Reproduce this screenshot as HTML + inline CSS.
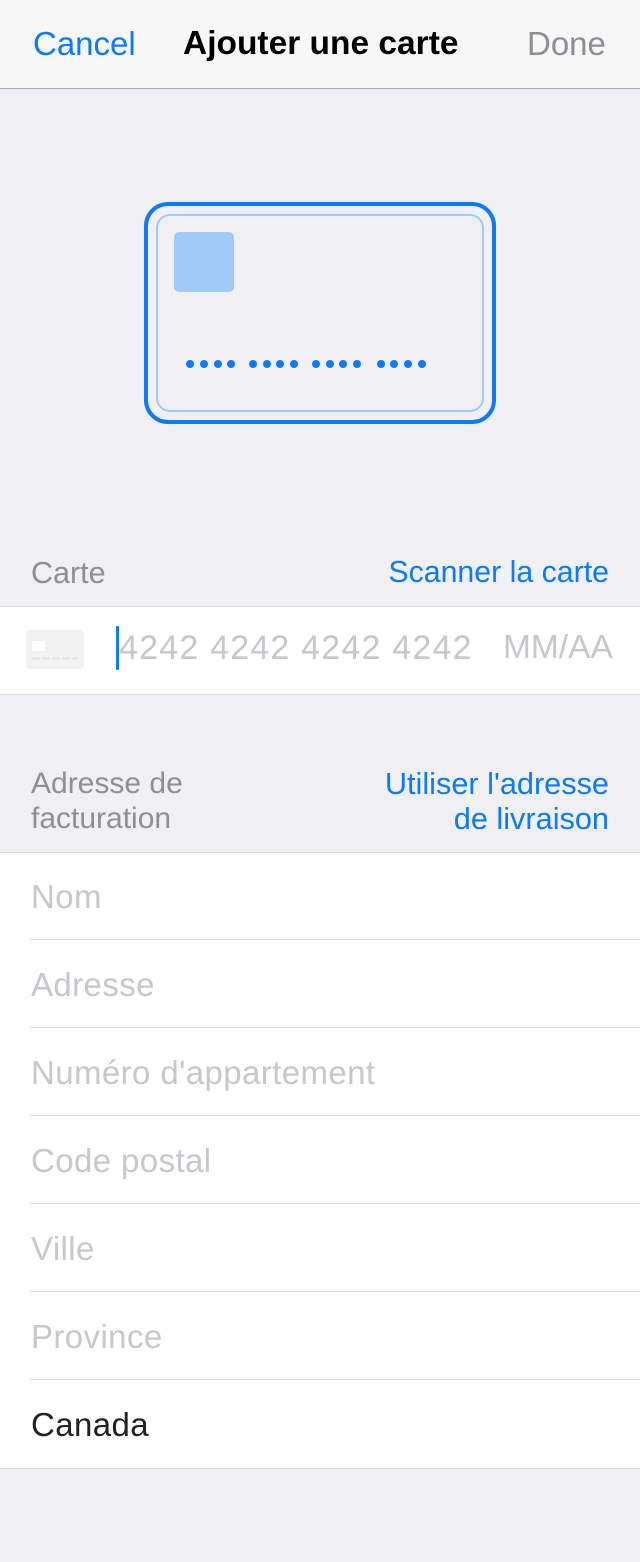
<!DOCTYPE html>
<html><head><meta charset="utf-8"><style>
body{margin:0;width:640px;height:1562px;background:#f0f0f3;font-family:"Liberation Sans",sans-serif;position:relative;overflow:hidden}
.a{position:absolute;white-space:nowrap}
.nav{position:absolute;left:0;top:0;width:640px;height:88px;background:#f7f7f7;border-bottom:1px solid #aaa}
.blue{color:#0a7aff}
.ph{color:#c7c7cc}
.row{position:absolute;left:0;width:640px;height:88px;background:#fff}
.row span{position:absolute;left:31px;top:25px;font-size:33px;letter-spacing:0.4px}
.sep{position:absolute;left:30px;right:0;height:1px;background:#d9d9dc}
.dot{position:absolute;width:8px;height:8px;border-radius:50%;background:#0a7aff;top:360px}
</style></head><body>
<div class="nav"></div>
<div class="a blue" style="left:33px;top:25px;font-size:33px">Cancel</div>
<div class="a" style="left:183px;top:25px;font-size:33.5px;font-weight:bold;color:#000">Ajouter une carte</div>
<div class="a" style="left:527px;top:25px;font-size:33px;color:#8e8e93">Done</div>

<div class="a" style="left:144px;top:202px;width:344px;height:214px;border:4px solid #0a7aff;border-radius:24px"></div>
<div class="a" style="left:156px;top:214px;width:324px;height:194px;border:2px solid #9ecbf9;border-radius:14px"></div>
<div class="a" style="left:174px;top:232px;width:60px;height:60px;border-radius:5px;background:#a0c9f8"></div>
<div class="dot" style="left:186px"></div><div class="dot" style="left:200px"></div><div class="dot" style="left:214px"></div><div class="dot" style="left:227px"></div>
<div class="dot" style="left:249px"></div><div class="dot" style="left:263px"></div><div class="dot" style="left:276px"></div><div class="dot" style="left:290px"></div>
<div class="dot" style="left:312px"></div><div class="dot" style="left:326px"></div><div class="dot" style="left:339px"></div><div class="dot" style="left:353px"></div>
<div class="dot" style="left:377px"></div><div class="dot" style="left:390px"></div><div class="dot" style="left:404px"></div><div class="dot" style="left:418px"></div>

<div class="a" style="left:31px;top:556px;font-size:30.5px;color:#8e8e93">Carte</div>
<div class="a blue" style="right:31px;top:556px;font-size:30.3px">Scanner la carte</div>

<div class="row" style="top:606px;height:87px;border-top:1px solid #d9d9dc;border-bottom:1px solid #d9d9dc"></div>
<div class="a" style="left:26px;top:630px;width:58px;height:39px;border-radius:4px;background:#f2f2f2"></div>
<div class="a" style="left:32px;top:641px;width:13px;height:10px;background:#fff;border-radius:1px"></div>
<div class="a" style="left:32px;top:657px;width:46px;height:3px;background:repeating-linear-gradient(90deg,#e6e6e6 0 8px,transparent 8px 10px)"></div>
<div class="a" style="left:116px;top:626px;width:3px;height:44px;background:#0a7aff;border-radius:1px"></div>
<div class="a ph" style="left:119px;top:629px;font-size:34px;letter-spacing:1.2px">4242 4242 4242 4242</div>
<div class="a ph" style="left:503px;top:629px;font-size:33.5px">MM/AA</div>

<div class="a" style="left:31px;top:766px;font-size:30px;color:#8e8e93;line-height:35px">Adresse de<br>facturation</div>
<div class="a blue" style="right:31px;top:766px;font-size:30.7px;line-height:35px;text-align:right">Utiliser l'adresse<br>de livraison</div>

<div class="a" style="left:0;top:852px;width:640px;height:615px;background:#fff;border-top:1px solid #d9d9dc;border-bottom:1px solid #d9d9dc"></div>
<div class="row" style="top:853px"><span class="ph">Nom</span></div>
<div class="sep" style="top:939px"></div>
<div class="row" style="top:941px"><span class="ph">Adresse</span></div>
<div class="sep" style="top:1027px"></div>
<div class="row" style="top:1029px"><span class="ph">Numéro d'appartement</span></div>
<div class="sep" style="top:1115px"></div>
<div class="row" style="top:1117px"><span class="ph">Code postal</span></div>
<div class="sep" style="top:1203px"></div>
<div class="row" style="top:1205px"><span class="ph">Ville</span></div>
<div class="sep" style="top:1291px"></div>
<div class="row" style="top:1293px"><span class="ph">Province</span></div>
<div class="sep" style="top:1379px"></div>
<div class="row" style="top:1381px;height:86px"><span style="color:#222">Canada</span></div>
</body></html>
